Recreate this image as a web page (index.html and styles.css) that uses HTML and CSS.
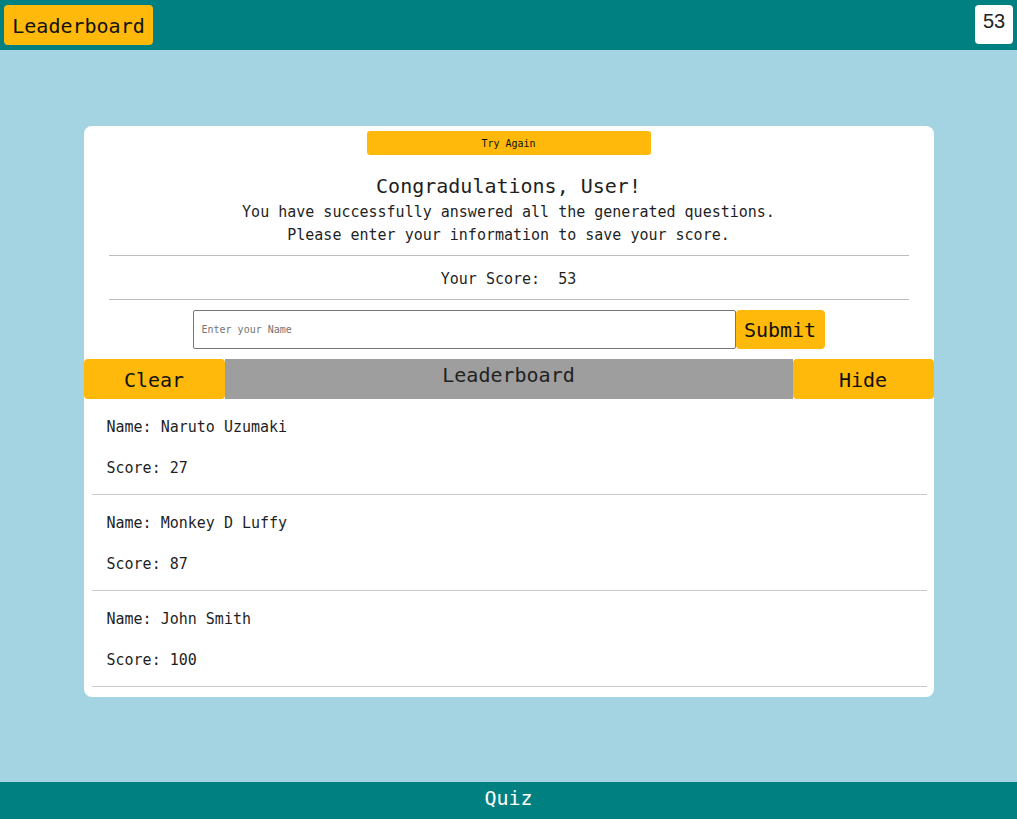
FILE: index.html
```html
<!DOCTYPE html>
<html lang="en">
<head>
<meta charset="utf-8">
<title>Quiz</title>
<link rel="stylesheet" href="styles.css">
</head>
<body>
<header class="topbar">
  <button class="btn btn-top">Leaderboard</button>
  <div class="score-badge">53</div>
</header>
<main class="main">
  <section class="card">
    <button class="btn btn-try">Try Again</button>
    <div class="intro">
      <h2 class="intro-title">Congradulations, User!</h2>
      <p class="intro-line">You have successfully answered all the generated questions.</p>
      <p class="intro-line">Please enter your information to save your score.</p>
      <hr class="rule">
      <p class="your-score">Your Score:&nbsp; 53</p>
      <hr class="rule">
    </div>
    <form class="name-form" onsubmit="return false">
      <input class="name-input" type="text" placeholder="Enter your Name">
      <button class="btn btn-submit" type="submit">Submit</button>
    </form>
    <div class="board-bar">
      <button class="btn btn-bar">Clear</button>
      <div class="board-title">Leaderboard</div>
      <button class="btn btn-bar">Hide</button>
    </div>
    <ul class="entries">
      <li class="entry"><p>Name: Naruto Uzumaki</p><p>Score: 27</p></li>
      <li class="entry"><p>Name: Monkey D Luffy</p><p>Score: 87</p></li>
      <li class="entry"><p>Name: John Smith</p><p>Score: 100</p></li>
    </ul>
  </section>
</main>
<footer class="footer">Quiz</footer>
</body>
</html>
```

FILE: styles.css
```css
* { box-sizing: border-box; }
html, body { height: 100%; }
body {
  margin: 0;
  font-family: "DejaVu Sans Mono", "Liberation Mono", monospace;
  color: #1f1f1f;
  background: #a4d3e2;
  display: flex;
  flex-direction: column;
}
.btn {
  font-family: inherit;
  background: #ffb90a;
  color: #111;
  border: none;
  border-radius: 4px;
  cursor: pointer;
  padding: 0;
}
.topbar {
  height: 50px;
  background: #008080;
  display: flex;
  align-items: flex-start;
  justify-content: space-between;
  padding: 5px 4px 0 4px;
}
.btn-top {
  height: 40px;
  width: 149px;
  font-size: 20px;
  padding-top: 2px;
}
.score-badge {
  background: #fff;
  border-radius: 4px;
  width: 38px;
  height: 39px;
  font-family: "Liberation Sans", Arial, sans-serif;
  font-size: 20px;
  color: #222;
  text-align: center;
  padding-top: 5px;
}
.main {
  flex: 1;
  padding-top: 76px;
}
.card {
  width: 850px;
  margin: 0 auto;
  background: #fff;
  border-radius: 8px;
  padding: 5px 0 10px;
  display: flex;
  flex-direction: column;
  align-items: center;
}
.btn-try {
  width: 284px;
  height: 24px;
  font-size: 10px;
  border-radius: 3px;
}
.intro {
  width: 800px;
  text-align: center;
}
.intro-title {
  font-size: 20px;
  font-weight: normal;
  line-height: 24px;
  margin: 19px 0 3px;
}
.intro-line {
  font-size: 15px;
  line-height: 23px;
  margin: 0;
}
.rule {
  border: none;
  border-top: 1px solid #bdbdbd;
  margin: 8px 0 0;
}
.your-score {
  font-size: 15px;
  line-height: 22px;
  margin: 12px 0 9px;
}
.name-form {
  display: flex;
  margin-top: 10px;
}
.name-input {
  width: 543px;
  height: 39px;
  border: 1px solid #767676;
  border-radius: 2px;
  padding: 0 8px;
  font-family: inherit;
  font-size: 10px;
}
.name-input::placeholder { color: #757575; }
.btn-submit {
  width: 89px;
  height: 39px;
  font-size: 20px;
}
.board-bar {
  margin-top: 10px;
  width: 100%;
  height: 40px;
  display: flex;
}
.btn-bar {
  width: 141px;
  height: 40px;
  font-size: 20px;
  padding-top: 2px;
}
.board-title {
  flex: 1;
  background: #9e9e9e;
  text-align: center;
  font-size: 20px;
  line-height: 24px;
  padding-top: 4px;
  color: #222;
}
.entries {
  list-style: none;
  margin: 0;
  padding: 0;
  width: 835px;
  align-self: flex-start;
  margin-left: 8px;
}
.entry {
  padding: 18px 15px 16px;
  border-bottom: 1px solid #c8c8c8;
}
.entry p {
  margin: 0;
  font-size: 15px;
  line-height: 20px;
}
.entry p + p { margin-top: 21px; }
.footer {
  height: 37px;
  background: #008080;
  color: #fff;
  font-size: 20px;
  text-align: center;
  line-height: 32px;
}
```
